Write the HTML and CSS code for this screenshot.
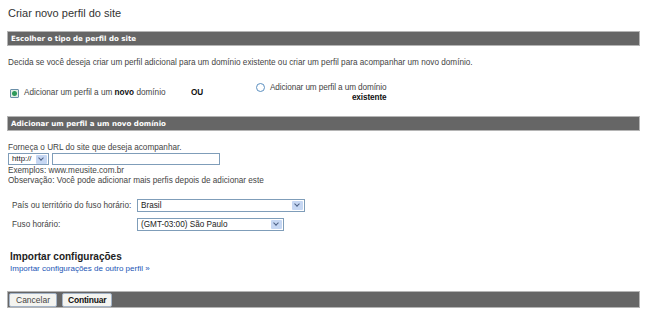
FILE: index.html
```html
<!DOCTYPE html>
<html>
<head>
	<title>Criar novo perfil do site</title>
	<meta charset="utf-8">
	<link rel="stylesheet" href="styles.css">
</head>
<body>

	<div class="page">
		<h1>Criar novo perfil do site</h1>

		<div class="bar">Escolher o tipo de perfil do site</div>
		<p class="intro">Decida se você deseja criar um perfil adicional para um domínio existente ou criar um perfil para acompanhar um novo domínio.</p>

		<div class="choice">
			<div class="opt left">
				<span class="radio checked"></span>
				<span>Adicionar um perfil a um <b>novo</b> domínio</span>
			</div>
			<div class="ou">OU</div>
			<div class="opt right">
				<span class="radio"></span>
				<span class="two">Adicionar um perfil a um domínio<br><b>existente</b></span>
			</div>
		</div>

		<div class="bar">Adicionar um perfil a um novo domínio</div>

		<div class="url">
			<div class="line">Forneça o URL do site que deseja acompanhar.</div>
			<div class="fields">
				<div class="select proto"><span>http://</span><i class="arrow"></i></div>
				<div class="input"></div>
			</div>
			<div class="line">Exemplos: www.meusite.com.br</div>
			<div class="line">Observação: Você pode adicionar mais perfis depois de adicionar este</div>
		</div>

		<div class="tz">
			<div class="row">
				<label>País ou território do fuso horário:</label>
				<div class="select wide"><span>Brasil</span><i class="arrow"></i></div>
			</div>
			<div class="row">
				<label>Fuso horário:</label>
				<div class="select mid"><span>(GMT-03:00) São Paulo</span><i class="arrow"></i></div>
			</div>
		</div>

		<div class="import">
			<h2>Importar configurações</h2>
			<a href="#">Importar configurações de outro perfil »</a>
		</div>

		<div class="footer">
			<button>Cancelar</button>
			<button class="main">Continuar</button>
		</div>
	</div>

</body>
</html>
```

FILE: styles.css
```css
*{
	box-sizing: border-box;
}
body{
	margin: 0px;
	background: white;
	font-family: 'Liberation Sans', Arial, sans-serif;
	font-size: 8.2px;
	color: #444;
}

.page{
	width: 633px;
	margin-left: 7px;
	padding-top: 6px;
}

h1{
	margin: 0px 0px 0px 1px;
	font-size: 11px;
	font-weight: normal;
	line-height: 14px;
	color: #333;
}

.bar{
	height: 15px;
	line-height: 13px;
	margin-top: 11px;
	padding-left: 3px;
	background: #666;
	border: 1px solid #b5b5b5;
	color: white;
	font-family: 'DejaVu Sans', Verdana, sans-serif;
	font-size: 7.1px;
	font-weight: bold;
}

.intro{
	margin: 12px 0px 0px 1px;
	line-height: 10px;
}

.choice{
	display: flex;
	align-items: flex-start;
	margin-top: 17px;
	padding-left: 3px;
	line-height: 10px;
}

.opt{
	display: flex;
	align-items: center;
	gap: 5px;
}

.opt.left{
	width: 181px;
	margin-top: 3px;
}

.opt b, .ou, .two b{
	color: #111;
}

.ou{
	width: 65px;
	margin-top: 3px;
	font-weight: bold;
}

.opt.right{
	align-items: flex-start;
	margin-top: -2px;
}

.two{
	text-align: right;
	letter-spacing: -0.1px;
}

.radio{
	width: 9px;
	height: 9px;
	border: 1px solid #5b8fc0;
	border-radius: 50%;
	background: white;
	flex: none;
}

.radio.checked{
	border-radius: 1px;
	border-color: #6a8fa8;
	background: radial-gradient(circle, #2e9a5a 0px, #2e9a5a 2px, #dfeee4 3px, #dfeee4 100%);
}

.choice + .bar{
	margin-top: 13px;
}

.url{
	margin: 12px 0px 0px 1px;
	line-height: 10px;
}

.fields{
	display: flex;
	gap: 3px;
	margin: 0px 0px 1px 0px;
}

.select{
	display: flex;
	align-items: center;
	justify-content: space-between;
	height: 13px;
	padding: 0px 1px 0px 3px;
	border: 1px solid #7f9db9;
	background: white;
	color: #222;
}

.arrow{
	width: 11px;
	height: 9px;
	background: #c6d7f3;
	border-radius: 1px;
	position: relative;
}

.arrow::after{
	content: "";
	position: absolute;
	left: 3px;
	top: 1px;
	width: 3px;
	height: 3px;
	border-right: 1.5px solid #4d6185;
	border-bottom: 1.5px solid #4d6185;
	transform: rotate(45deg);
}

.proto{
	width: 41px;
	height: 12px;
	font-size: 7.8px;
}

.input{
	width: 168px;
	height: 12px;
	border: 1px solid #7f9db9;
}

.tz{
	margin: 13px 0px 0px 5px;
}

.row{
	display: flex;
	align-items: center;
	margin-bottom: 6px;
}

.row label{
	width: 125px;
}

.select.wide{
	width: 168px;
}

.select.mid{
	width: 147px;
}

.import{
	margin: 20px 0px 0px 3px;
}

.import h2{
	margin: 0px;
	font-size: 10px;
	line-height: 12px;
	color: #222;
}

.import a{
	display: block;
	margin-top: 1px;
	color: #1a55b5;
	text-decoration: none;
	font-size: 8px;
	line-height: 10px;
}

.footer{
	display: flex;
	gap: 5px;
	margin-top: 17px;
	padding: 1px 0px 0px 1px;
	height: 17px;
	background: #666;
	border: 1px solid #b5b5b5;
}

.footer button{
	height: 14px;
	padding: 0px 6px;
	background: #f4f4f0;
	border: 1px solid #a4b4c8;
	border-radius: 2px;
	font-family: 'Liberation Sans', Arial, sans-serif;
	font-size: 8.5px;
	color: #444;
}

.footer button.main{
	padding: 0px 5px;
	font-weight: bold;
	color: #111;
	letter-spacing: -0.2px;
}
```
